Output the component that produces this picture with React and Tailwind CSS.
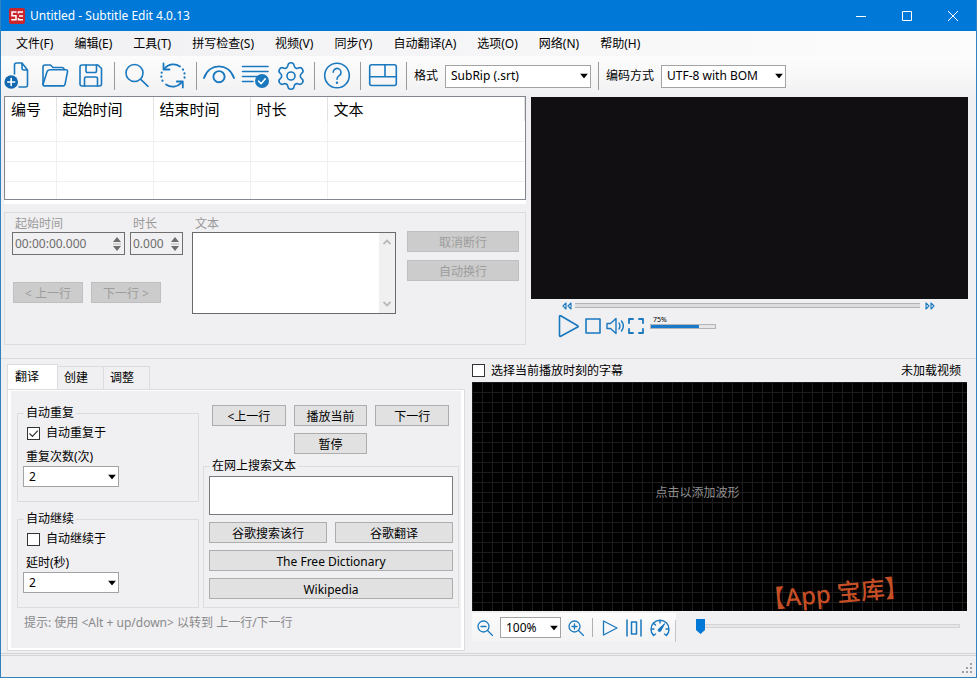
import { useState } from 'react'
import { Settings } from 'lucide-react'

const MENU = [
  '文件(F)', '编辑(E)', '工具(T)', '拼写检查(S)', '视频(V)', '同步(Y)',
  '自动翻译(A)', '选项(O)', '网络(N)', '帮助(H)',
]

const COLUMNS = [
  { label: '编号', width: 'w-[51px]' },
  { label: '起始时间', width: 'w-[97px]' },
  { label: '结束时间', width: 'w-[97px]' },
  { label: '时长', width: 'w-[77px]' },
  { label: '文本', width: '' },
]

/**
 * Icon - stroked 32x32 drawing used by the main toolbar
 */
function Icon({ children, className = 'w-8 h-8', viewBox = '0 0 32 32', strokeWidth = 1.6 }) {
  return (
    <svg
      viewBox={viewBox}
      className={`shrink-0 ${className}`}
      fill="none"
      stroke="#1a78bf"
      strokeWidth={strokeWidth}
      strokeLinecap="round"
      strokeLinejoin="round"
      aria-hidden="true"
    >
      {children}
    </svg>
  )
}

function ToolButton({ label, children }) {
  return (
    <button type="button" aria-label={label} className="w-9 h-8 flex items-center justify-center shrink-0">
      {children}
    </button>
  )
}

function Separator() {
  return (
    <div className="w-[10px] flex justify-center shrink-0">
      <div className="w-px h-7 bg-[#9a9a9a]" />
    </div>
  )
}

/**
 * Select - combo box with the small solid arrow
 */
function Select({ id, label, options, className = '' }) {
  return (
    <div className={`relative shrink-0 ${className}`}>
      <select
        id={id}
        aria-label={label}
        className="appearance-none block w-full h-full bg-white border border-[#a3a3a3] pl-[5px] pr-4 text-xs leading-4 text-black"
      >
        {options.map((o) => <option key={o}>{o}</option>)}
      </select>
      <svg viewBox="0 0 8 5" className="absolute right-[3px] top-1/2 -translate-y-1/2 w-2 h-[5px] pointer-events-none" aria-hidden="true">
        <path d="M0 0h8L4 5z" fill="#000" />
      </svg>
    </div>
  )
}

function PushButton({ children, disabled = false, className = '' }) {
  return (
    <button
      type="button"
      disabled={disabled}
      className={`h-[21px] pt-[2px] border text-xs leading-4 flex items-center justify-center whitespace-nowrap ${
        disabled ? 'bg-[#cccccc] border-[#bfbfc0] text-[#9d9d9d]' : 'bg-[#e1e1e1] border-[#adadad] text-black'
      } ${className}`}
    >
      {children}
    </button>
  )
}

function CheckBox({ id, label, defaultChecked = false, className = '' }) {
  const [checked, setChecked] = useState(defaultChecked)
  return (
    <div className={`flex items-center gap-[6px] h-[14px] ${className}`}>
      <div className="relative w-[13px] h-[13px]">
        <input
          id={id}
          type="checkbox"
          checked={checked}
          onChange={(e) => setChecked(e.target.checked)}
          className="appearance-none block w-[13px] h-[13px] border border-[#333] bg-white"
        />
        {checked && (
          <svg viewBox="0 0 13 13" className="absolute inset-0 pointer-events-none" aria-hidden="true">
            <path d="M2.500 6.500l3 3L10.800 3.600" fill="none" stroke="#333" strokeWidth="1.2" />
          </svg>
        )}
      </div>
      <label htmlFor={id} className="text-xs leading-[14px]">{label}</label>
    </div>
  )
}

function SpinField({ id, label, value, className = '' }) {
  return (
    <div className={className}>
      <label htmlFor={id} className="block text-xs leading-4 pl-[3px] text-[#9a9a9a]">{label}</label>
      <div className="flex items-center h-[23px] border border-[#6f6f70]">
        <input id={id} disabled defaultValue={value} className="min-w-0 flex-1 pl-[2px] text-xs leading-4 text-[#6d6d6d]" />
        <svg viewBox="0 0 8 14" className="w-2 h-[14px] mr-[3px] shrink-0" aria-hidden="true">
          <path d="M4 0l4 5H0zM4 14l4-5H0z" fill="#6d6d6d" />
          <path d="M0 7h8" stroke="#b5b5b5" />
        </svg>
      </div>
    </div>
  )
}

function TitleBar() {
  return (
    <header className="flex items-center h-[31px] bg-[#0078d7] text-white pl-2">
      <svg viewBox="0 0 16 16" className="w-4 h-4 shrink-0" aria-hidden="true">
        <rect width="16" height="16" rx="2" fill="#c9252d" />
        <path d="M7.500 4H3v3.800h4v4H2.200M8.800 4H14M10 7.900h4M8.800 11.800H14M9.400 4v1.600M9.400 10v1.800" fill="none" stroke="#fff" strokeWidth="1.5" />
      </svg>
      <h1 className="pl-[5px] text-xs leading-4 flex-1">Untitled - Subtitle Edit 4.0.13</h1>
      <button type="button" aria-label="最小化" className="w-[46px] h-full flex items-center justify-center">
        <svg viewBox="0 0 10 10" className="w-[10px] h-[10px]"><path d="M0 5.500h10" stroke="#fff" /></svg>
      </button>
      <button type="button" aria-label="最大化" className="w-[46px] h-full flex items-center justify-center">
        <svg viewBox="0 0 10 10" className="w-[10px] h-[10px]"><path d="M.5 .5h9v9h-9z" fill="none" stroke="#fff" /></svg>
      </button>
      <button type="button" aria-label="关闭" className="w-[46px] h-full flex items-center justify-center">
        <svg viewBox="0 0 10 10" className="w-[10px] h-[10px]"><path d="M0 0l10 10M10 0L0 10" stroke="#fff" /></svg>
      </button>
    </header>
  )
}

function Toolbar() {
  return (
    <div className="flex items-center h-10 bg-linear-to-b from-[#fcfcfc] via-[#f8f8f9] to-[#f0eff1]">
      <ToolButton label="新建">
        <Icon>
          <path d="M11.500 14V5a2 2 0 0 1 2-2h5.500l5.500 7v15a2 2 0 0 1-2 2H16M19 3v5a2 2 0 0 0 2 2h3.500" />
          <circle cx="8.200" cy="22" r="6.800" fill="#1168b0" stroke="none" />
          <path d="M8.200 18.500v7M4.700 22h7" stroke="#fff" />
        </Icon>
      </ToolButton>
      <ToolButton label="打开">
        <Icon>
          <path d="M4 24.500V7a2 2 0 0 1 2-2h5.500L14 7.500h9a2 2 0 0 1 2 2" />
          <path d="M4 24.500L8 11.800a3 3 0 0 1 2.800-2.100H27a1.600 1.600 0 0 1 1.500 2.100L26 24.300a2 2 0 0 1-2 1.600H5.200A1.200 1.200 0 0 1 4 24.500z" />
        </Icon>
      </ToolButton>
      <ToolButton label="保存">
        <Icon>
          <path d="M7 5h16l3.500 3.500V24a2 2 0 0 1-2 2H7a2 2 0 0 1-2-2V7a2 2 0 0 1 2-2z" />
          <path d="M11 5v6a1.500 1.500 0 0 0 1.500 1.500H20a1.500 1.500 0 0 0 1.500-1.500V5M9.500 26v-7.500A1.500 1.500 0 0 1 11 17h10a1.500 1.500 0 0 1 1.500 1.500V26" />
        </Icon>
      </ToolButton>
      <Separator />
      <ToolButton label="查找">
        <Icon>
          <circle cx="13.500" cy="13" r="8.500" />
          <path d="M19.700 19.300l7.300 7" />
        </Icon>
      </ToolButton>
      <ToolButton label="替换">
        <Icon>
          <path d="M7.500 8.500A11.500 11.500 0 0 1 23 6.500M24.500 22.500A11.500 11.500 0 0 1 9 24.500" strokeWidth="1.8" />
          <path d="M6.500 3.500v6h6M25.800 27.500v-6h-6" strokeWidth="1.8" />
          <path d="M26 9.500A11.500 11.500 0 0 1 27.300 18.500M4.700 12.500A11.500 11.500 0 0 0 6 21.500" strokeWidth="2.2" strokeDasharray="0.1 4" />
        </Icon>
      </ToolButton>
      <Separator />
      <ToolButton label="视觉同步">
        <Icon strokeWidth={1.9}>
          <path d="M1 18C6.500 2.500 25.500 2.500 31 18" />
          <circle cx="16" cy="16.700" r="5.600" />
        </Icon>
      </ToolButton>
      <ToolButton label="拼写检查">
        <Icon>
          <path d="M3.500 6.500h25.500M3.500 11.500h25.500M3.500 16.500h14.500M3.500 21.500h10.500" />
          <circle cx="23" cy="21" r="7" fill="#1a78bf" stroke="none" />
          <path d="M19.700 21.200l2.400 2.500 4.200-4.900" stroke="#fff" />
        </Icon>
      </ToolButton>
      <ToolButton label="设置">
        <Settings className="w-8 h-8 shrink-0 text-[#1a78bf]" strokeWidth={1.2} />
      </ToolButton>
      <Separator />
      <ToolButton label="帮助">
        <Icon>
          <circle cx="16" cy="15.500" r="12.300" />
          <path d="M12.200 12.300a3.900 3.900 0 1 1 6 3.300c-1.600 1.100-2.200 1.800-2.200 3.600" />
          <circle cx="16" cy="22.800" r="1.200" fill="#1a78bf" stroke="none" />
        </Icon>
      </ToolButton>
      <Separator />
      <ToolButton label="布局">
        <Icon>
          <rect x="2.700" y="4.700" width="26.600" height="20.800" rx="2" />
          <path d="M2.700 16.700h26.600M18 4.700v12" />
        </Icon>
      </ToolButton>
      <Separator />
      <label htmlFor="format" className="w-[34px] pl-[3px] text-xs leading-4 shrink-0">格式</label>
      <Select id="format" options={['SubRip (.srt)']} className="w-[146px] h-[23px] mr-[2px]" />
      <Separator />
      <label htmlFor="encoding" className="w-[58px] pl-[3px] text-xs leading-4 shrink-0">编码方式</label>
      <Select id="encoding" options={['UTF-8 with BOM']} className="w-[125px] h-[23px]" />
    </div>
  )
}

function SubtitleList() {
  return (
    <div className="bg-white pb-1">
      <div className="border border-[#828790]">
        <table className="w-full table-fixed border-collapse">
          <thead>
            <tr className="h-6">
              {COLUMNS.map((c) => (
                <th key={c.label} className={`${c.width} border-r border-[#e2e2e2] pl-[6px] text-left align-middle text-[15px] leading-5 font-normal`}>
                  {c.label}
                </th>
              ))}
            </tr>
          </thead>
          <tbody>
            {[0, 1, 2, 3].map((r) => (
              <tr key={r} className={r < 3 ? 'h-5 border-b border-[#f0f0f0]' : 'h-[18px]'}>
                {COLUMNS.map((c, i) => (
                  <td key={c.label} className={i < 4 ? 'border-r border-[#f0f0f0]' : ''} />
                ))}
              </tr>
            ))}
          </tbody>
        </table>
      </div>
    </div>
  )
}

function EditPane() {
  return (
    <div className="mt-2 h-[133px] border border-[#dcdcdd] pl-[7px] pr-[6px] pt-[3px] flex">
      <div>
        <div className="flex gap-[5px]">
          <SpinField id="start" label="起始时间" value="00:00:00.000" className="w-[113px]" />
          <SpinField id="duration" label="时长" value="0.000" className="w-[53px]" />
        </div>
        <div className="flex gap-2 mt-[27px] pl-px">
          <PushButton disabled className="w-[70px]">&lt; 上一行</PushButton>
          <PushButton disabled className="w-[70px]">下一行 &gt;</PushButton>
        </div>
      </div>
      <div className="ml-[9px] flex-1 min-w-0">
        <label htmlFor="text" className="block text-xs leading-4 pl-[3px] text-[#9a9a9a]">文本</label>
        <div className="flex h-[82px] border border-[#6a6a6d] bg-white">
          <textarea id="text" disabled className="flex-1 min-w-0 resize-none overflow-hidden" />
          <div className="w-4 bg-[#f0f0f0] flex flex-col justify-between items-center py-[6px]">
            <svg viewBox="0 0 8 6" className="w-2 h-[6px]" aria-hidden="true"><path d="M.5 5L4 1.500 7.500 5" fill="none" stroke="#b9b9bb" strokeWidth="1.8" /></svg>
            <svg viewBox="0 0 8 6" className="w-2 h-[6px]" aria-hidden="true"><path d="M.5 1L4 4.500 7.500 1" fill="none" stroke="#b9b9bb" strokeWidth="1.8" /></svg>
          </div>
        </div>
      </div>
      <div className="ml-[11px] pt-[15px] w-[112px] flex flex-col gap-2">
        <PushButton disabled>取消断行</PushButton>
        <PushButton disabled>自动换行</PushButton>
      </div>
    </div>
  )
}

function VideoPane() {
  return (
    <div className="flex flex-col pt-px min-w-0">
      <div className="flex-1 min-h-[202px] bg-[#110f11]" />
      <div className="flex items-center gap-[3px] pl-[31px] pr-[33px] pt-px h-3">
        <button type="button" aria-label="快退">
          <Icon viewBox="0 0 10 8" className="w-[10px] h-2" strokeWidth={1.1}><path d="M4 1v6L1 4zM9 1v6L6 4z" /></Icon>
        </button>
        <div className="flex-1 h-[5px] border-y border-[#b4b4b6] bg-[#dcdcdc] mr-[2px]" />
        <button type="button" aria-label="快进">
          <Icon viewBox="0 0 10 8" className="w-[10px] h-2" strokeWidth={1.1}><path d="M1 1v6l3-3zM6 1v6l3-3z" /></Icon>
        </button>
      </div>
      <div className="flex items-center h-[47px] pl-[27px] pb-[17px]">
        <button type="button" aria-label="播放">
          <Icon viewBox="0 0 22 24" className="w-[22px] h-6"><path d="M1.500 2.500v19c0 .8.500 1 1.200.7l17-9.200c.6-.4.600-.8 0-1.200l-17-10c-.7-.3-1.200 0-1.200.7z" /></Icon>
        </button>
        <button type="button" aria-label="停止" className="ml-[5px]">
          <Icon viewBox="0 0 16 16" className="w-4 h-4"><rect x="1" y="1" width="14" height="14" /></Icon>
        </button>
        <button type="button" aria-label="静音" className="ml-[5px]">
          <Icon viewBox="0 0 18 18" className="w-[18px] h-[18px]" strokeWidth={1.4}>
            <path d="M1 6.500v5h3.500L10 16.500v-15L4.500 6.500zM13 6c1.200 2 1.200 4.200 0 6M15.500 4c2.200 3 2.200 7 0 10" />
          </Icon>
        </button>
        <button type="button" aria-label="全屏" className="ml-1">
          <Icon viewBox="0 0 16 16" className="w-4 h-4" strokeWidth={1.8}><path d="M1 5V1h4M11 1h4v4M15 11v4h-4M5 15H1v-4" /></Icon>
        </button>
        <div className="ml-[6px] w-[66px] pb-[9px]">
          <div className="pl-[3px] text-[7px] leading-[9px]">75%</div>
          <div className="h-[5px] border border-[#b4b4b6] bg-[#e6e6e6]">
            <div className="h-full w-3/4 bg-[#1979ca]" />
          </div>
        </div>
      </div>
    </div>
  )
}

function Group({ title, children, className = '', bodyClass = '' }) {
  return (
    <fieldset className={`border border-[#dcdcdd] min-w-0 ${className}`}>
      <legend className="ml-[6px] px-[2px] text-xs leading-[14px]">{title}</legend>
      <div className={bodyClass}>{children}</div>
    </fieldset>
  )
}

function RepeatGroup({ id, title, check, checked, label }) {
  return (
    <Group title={title} bodyClass="pt-[6px] pb-[14px] pl-[5px]">
      <CheckBox id={`${id}-on`} label={check} defaultChecked={checked} className="ml-1" />
      <label htmlFor={id} className="block mt-[10px] pl-[3px] text-xs leading-[14px]">{label}</label>
      <Select id={id} options={['2']} className="w-24 h-[21px] mt-[2px]" />
    </Group>
  )
}

function TabsPane() {
  const tabs = ['翻译', '创建', '调整']
  return (
    <div className="flex flex-col min-w-0">
      <div className="flex items-end" role="tablist">
        {tabs.map((t, i) => (
          <button
            key={t}
            type="button"
            role="tab"
            aria-selected={i === 0}
            className={
              i === 0
                ? 'w-[51px] h-[25px] pl-[7px] text-left text-xs leading-4 bg-white border border-b-0 border-[#dcdcdd]'
                : 'w-[46px] h-[23px] pl-[6px] text-left text-xs leading-4 border border-l-0 border-b-0 border-[#dcdcdd]'
            }
          >
            {t}
          </button>
        ))}
      </div>
      <div className="flex-1 border border-[#dcdcdd] bg-white pt-px pb-[2px] px-[3px]">
        <div className="h-full bg-[#f0eff1] pt-[14px] pl-[6px] pr-[2px]">
          <div className="grid grid-cols-[182fr_256fr] gap-1">
            <div className="flex flex-col gap-[10px] pt-px">
              <RepeatGroup id="repeat" title="自动重复" check="自动重复于" checked label="重复次数(次)" />
              <RepeatGroup id="continue" title="自动继续" check="自动继续于" label="延时(秒)" />
            </div>
            <div>
              <div className="grid grid-cols-3 gap-x-2 gap-y-[7px] pl-[9px] pr-[10px]">
                <PushButton>&lt;上一行</PushButton>
                <PushButton>播放当前</PushButton>
                <PushButton>下一行</PushButton>
                <PushButton className="col-start-2">暂停</PushButton>
              </div>
              <Group title="在网上搜索文本" className="mt-[5px]" bodyClass="grid grid-cols-2 gap-x-2 gap-y-[7px] px-[5px] pt-[3px] pb-[8px]">
                <textarea aria-label="在网上搜索文本" className="col-span-2 block h-[39px] resize-none bg-white border border-[#7a7a7a]" />
                <PushButton>谷歌搜索该行</PushButton>
                <PushButton>谷歌翻译</PushButton>
                <PushButton className="col-span-2">The Free Dictionary</PushButton>
                <PushButton className="col-span-2">Wikipedia</PushButton>
              </Group>
            </div>
          </div>
          <p className="mt-[8px] pl-[7px] text-xs leading-[14px] text-[#8a8a8c]">提示: 使用 &lt;Alt + up/down&gt; 以转到 上一行/下一行</p>
        </div>
      </div>
    </div>
  )
}

function WavePane() {
  return (
    <div className="flex flex-col min-w-0">
      <div className="flex items-center justify-between h-[18px] pb-[5px] pr-[6px]">
        <CheckBox id="select-current" label="选择当前播放时刻的字幕" />
        <span className="text-xs leading-[14px]">未加载视频</span>
      </div>
      <div className="relative flex-1 flex items-center justify-center bg-black bg-[linear-gradient(#1c1c1c_1px,transparent_1px),linear-gradient(90deg,#1c1c1c_1px,transparent_1px)] bg-[size:10px_10px]">
        <p className="text-xs leading-4 text-[#8f8f8f] pr-11 pb-2">点击以添加波形</p>
        <div className="absolute right-[58px] bottom-[6px] -rotate-5 whitespace-nowrap text-[24px] leading-6 font-medium text-[#c64f26]">【App 宝库】</div>
      </div>
      <div className="flex items-center mt-[2px] mb-[9px] h-[29px]">
        <div className="flex items-center h-full w-[204px] shrink-0 bg-linear-to-b from-[#fcfcfc] to-[#f3f3f4] pl-[5px]">
          <button type="button" aria-label="缩小">
            <Icon viewBox="0 0 16 16" className="w-4 h-4" strokeWidth={1.3}><circle cx="6.500" cy="6.500" r="5.500" /><path d="M10.500 10.500l5 5M4 6.500h5" /></Icon>
          </button>
          <Select label="缩放" options={['100%']} className="w-[61px] h-[21px] ml-[7px]" />
          <button type="button" aria-label="放大" className="ml-[7px]">
            <Icon viewBox="0 0 16 16" className="w-4 h-4" strokeWidth={1.3}><circle cx="6.500" cy="6.500" r="5.500" /><path d="M10.500 10.500l5 5M4 6.500h5M6.500 4v5" /></Icon>
          </button>
          <div className="w-px h-[19px] bg-[#b0b0b0] mx-2" />
          <button type="button" aria-label="播放" className="ml-px">
            <Icon viewBox="0 0 16 16" className="w-4 h-4" strokeWidth={1.3}><path d="M1.500 1v14L15 8z" /></Icon>
          </button>
          <button type="button" aria-label="居中" className="ml-2">
            <Icon viewBox="0 0 16 18" className="w-4 h-[18px]" strokeWidth={1.5}><path d="M1 1v16M15 1v16" /><rect x="5.500" y="3" width="5" height="12" /></Icon>
          </button>
          <button type="button" aria-label="播放速度" className="ml-2">
            <Icon viewBox="0 0 20 18" className="w-5 h-[18px]" strokeWidth={1.4}>
              <path d="M3.500 16.500a9 9 0 1 1 13 0M10 1v3M3.500 4l2 2M1 10h3M16 10h3M3.500 16.500l2-1.500M16.500 16.500l-2-1.500" />
              <path d="M14.500 5l-3.500 6.500a1.500 1.500 0 1 1-2.200-1.700z" fill="#1a78bf" strokeWidth="1" />
            </Icon>
          </button>
          <div className="w-px h-[22px] bg-[#c4c4c4] ml-auto mt-[6px]" />
        </div>
        <div className="relative flex-1 ml-[22px] mr-[7px] mb-1 h-1 border border-[#d3d3d5] bg-[#e7e7e8]">
          <input type="range" aria-label="位置" defaultValue="0" className="absolute inset-0 w-full h-full opacity-0" />
          <svg viewBox="0 0 9 15" className="absolute left-[-3px] top-[-6px] w-[9px] h-[15px] pointer-events-none" aria-hidden="true">
            <path d="M0 0h9v11l-4.500 4L0 11z" fill="#0078d7" />
          </svg>
        </div>
      </div>
    </div>
  )
}

export default function App() {
  return (
    <div className="min-h-screen flex flex-col border border-t-0 border-[#2f82bd] bg-[#f0eff1] text-black font-['Noto_Sans','Noto_Sans_CJK_SC',sans-serif]">
      <TitleBar />
      <nav className="flex items-center gap-px h-[25px] pl-[5px] bg-linear-to-r from-[#f0eff1] to-[#fcfcfd]">
        {MENU.map((m) => (
          <button key={m} type="button" className="px-[10px] text-xs leading-4 whitespace-nowrap">{m}</button>
        ))}
      </nav>
      <Toolbar />
      <main className="flex-1 flex flex-col">
        <section className="grid grid-cols-[522fr_437fr] gap-[5px] pl-[3px] pr-2">
          <div className="min-w-0 pb-[13px]">
            <SubtitleList />
            <EditPane />
          </div>
          <VideoPane />
        </section>
        <section className="flex-1 grid grid-cols-[458fr_495fr] gap-[7px] pl-[6px] pr-[9px] pt-[5px] pb-[2px] border-t border-[#dadadb]">
          <TabsPane />
          <WavePane />
        </section>
      </main>
      <footer className="flex items-end justify-end h-6 border-t-3 border-double border-[#d3d3d5] p-[3px]">
        <svg viewBox="0 0 11 11" className="w-[11px] h-[11px]" fill="#a0a0a2" aria-hidden="true">
          <path d="M8 0h2v2H8zM4 4h2v2H4zM8 4h2v2H8zM0 8h2v2H0zM4 8h2v2H4zM8 8h2v2H8z" />
        </svg>
      </footer>
    </div>
  )
}
